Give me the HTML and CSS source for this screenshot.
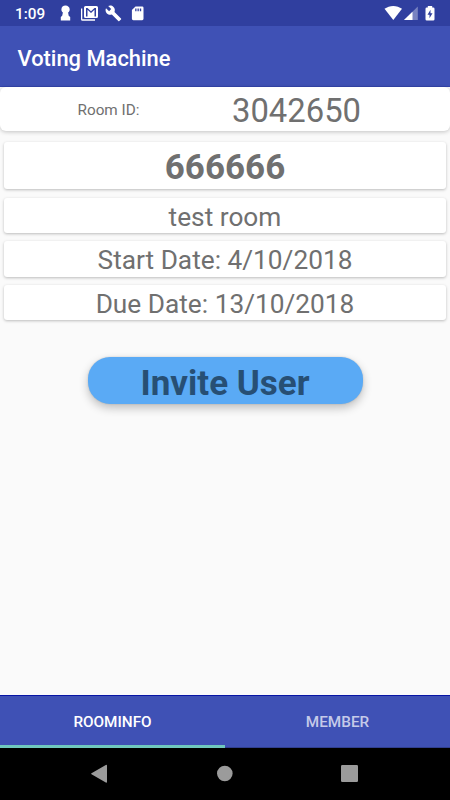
FILE: index.html
```
<!DOCTYPE html>
<html lang="en">
<head>
<meta charset="utf-8">
<title>Voting Machine</title>
<link rel="stylesheet" href="styles.css">
</head>
<body>
<div class="screen">
  <div class="status">
    <span class="clock">1:09</span>
    <svg class="status-left" width="95" height="26" viewBox="0 0 95 26" fill="#fff">
      <path d="M10.500 5.500c-2.400 0-4.100 1.700-4.100 3.900 0 1.300.6 2.300 1.500 3L7.200 15.700 5.800 17v3.600h9.400V17l-1.500-1.300-.6-3.300c1-.7 1.600-1.700 1.600-3 0-2.200-1.800-3.900-4.200-3.900z"/>
      <g transform="translate(5 0)">
        <path d="M21 8.500h1.300v10.800H35v1.400H22.500q-1.500 0-1.500-1.500z"/>
        <path fill-rule="evenodd" d="M25.500 6H36.500q1.500 0 1.500 1.500v9q0 1.500-1.500 1.500H25.500q-1.500 0-1.500-1.500v-9Q24 6 25.500 6zM26 8v8.500h1.500V9.800l3.500 3.300 3.500-3.300v6.700H36V8h-1.500L31 11.200 27.500 8z"/>
        <path d="M61 18.400l-6.500-6.500c.7-1.700.3-3.600-1-4.900-1.500-1.500-3.600-1.800-5.300-.9l3 3-2.100 2.100-3.100-3c-.8 1.700-.5 3.900.9 5.300 1.400 1.300 3.300 1.700 4.900 1l6.500 6.500c.3.300.7.300 1 0l1.700-1.600c.3-.3.3-.7 0-1z"/>
      </g>
      <path transform="translate(.5 0)" fill-rule="evenodd" d="M80 6.500h6.700q1.300 0 1.300 1.300v11q0 1.400-1.300 1.400h-8.900q-1.400 0-1.400-1.400V10zM79.700 8.500v2.700h1.300V8.500zM82 8.500v2.700h1.300V8.500zM84.300 8.500v2.700h1.400V8.500z"/>
    </svg>
    <svg class="status-right" width="60" height="26" viewBox="0 0 60 26" fill="#fff">
      <path d="M4.500 8.800C9.500 4.900 17 4.900 22 8.800L13.300 20z"/>
      <path d="M24 20 37.800 6.500V20z" opacity=".35"/>
      <path d="M24 20 32.500 11.700V20z"/>
      <path fill-rule="evenodd" d="M47.800 6h4.400v1.400h1q1.300 0 1.300 1.300v10.500q0 1.300-1.300 1.300h-6.400q-1.300 0-1.300-1.300V8.700q0-1.300 1.300-1.300h1zM50.500 9.700l-3 5h2v3.500l3-5h-2z"/>
    </svg>
  </div>
  <header class="appbar"><h1>Voting Machine</h1></header>
  <main class="content">
    <section class="room-id"><span class="label">Room ID:</span><span class="number">3042650</span></section>
    <div class="cards">
      <div class="card name">666666</div>
      <div class="card">test room</div>
      <div class="card">Start Date: 4/10/2018</div>
      <div class="card">Due Date: 13/10/2018</div>
    </div>
    <button class="invite" type="button">Invite User</button>
  </main>
  <nav class="tabs">
    <div class="tab active">ROOMINFO</div>
    <div class="tab">MEMBER</div>
  </nav>
  <div class="navbar">
    <svg width="450" height="52" viewBox="0 0 450 52" fill="#9b9b9b">
      <path d="M91.500 25.200 105.800 17q1.200-.5 1.200.8v15.900q0 1.300-1.200.8L91.500 26.300q-.9-.5 0-1.100z"/>
      <circle cx="224.800" cy="25.500" r="7.800"/>
      <rect x="341" y="17" width="17" height="17" rx="1.200"/>
    </svg>
  </div>
</div>
</body>
</html>
```
FILE: styles.css
```
* { box-sizing: border-box; }
body { margin: 0; font-family: Roboto, "Liberation Sans", sans-serif; }
.screen {
  width: 450px;
  height: 800px;
  display: flex;
  flex-direction: column;
  overflow: hidden;
  background: #fafafa;
  color: #707070;
}
.status {
  height: 26px;
  flex: none;
  display: flex;
  background: #303f9f;
  color: #fff;
}
.clock {
  width: 55px;
  padding-left: 15px;
  font-size: 15.300px;
  font-weight: 500;
  line-height: 28px;
}
.status-right { margin-left: auto; margin-right: 10px; }
.appbar {
  height: 61px;
  flex: none;
  display: flex;
  align-items: center;
  padding: 4px 0 0 17.500px;
  background: #3f51b5;
  border-bottom: 1px solid #3445ab;
}
h1 {
  margin: 0;
  color: #fff;
  font-size: 21.900px;
  font-weight: 500;
  line-height: 31px;
}
.content {
  flex: 1;
  display: flex;
  flex-direction: column;
  align-items: center;
}
.room-id {
  width: 100%;
  height: 44px;
  display: flex;
  align-items: center;
  border-radius: 6px;
  background: #fff;
  box-shadow: 0 1px 4px rgba(0, 0, 0, .22);
}
.label { width: 217px; padding-top: 2px; text-align: center; font-size: 15.300px; }
.number { width: 159px; text-align: center; font-size: 32.800px; line-height: 44px; padding-top: 4px; }
.cards {
  width: 100%;
  padding: 11px 4px 0;
  display: flex;
  flex-direction: column;
  gap: 8.500px;
}
.card {
  height: 35.300px;
  border-radius: 3px;
  background: #fff;
  box-shadow: 0 1px 3px rgba(0, 0, 0, .25);
  text-align: center;
  font-size: 26.250px;
  line-height: 38px;
}
.name {
  height: 47px;
  font-size: 35px;
  font-weight: 700;
  line-height: 51px;
}
.invite {
  width: 275px;
  height: 46.500px;
  margin-top: 37px;
  padding: 5px 0 0;
  border: 0;
  border-radius: 22px;
  background: #5aaaf5;
  box-shadow: 0 4px 10px rgba(0, 0, 0, .24), 0 0 2px rgba(0, 0, 0, .15);
  color: #274f74;
  font: 700 35px/43px Roboto, sans-serif;
}
.tabs {
  height: 53px;
  flex: none;
  display: flex;
  background: #3f51b5;
  border-top: 1px solid #0715a5;
}
.tab {
  flex: 1;
  color: #c5cae9;
  text-align: center;
  font-size: 15.300px;
  font-weight: 500;
  line-height: 52px;
  border-bottom: 1px solid #303f8f;
}
.active { color: #fff; border-bottom: 3px solid #70c8be; }
.navbar { height: 52px; flex: none; background: #000; }
.navbar svg { display: block; }
```
